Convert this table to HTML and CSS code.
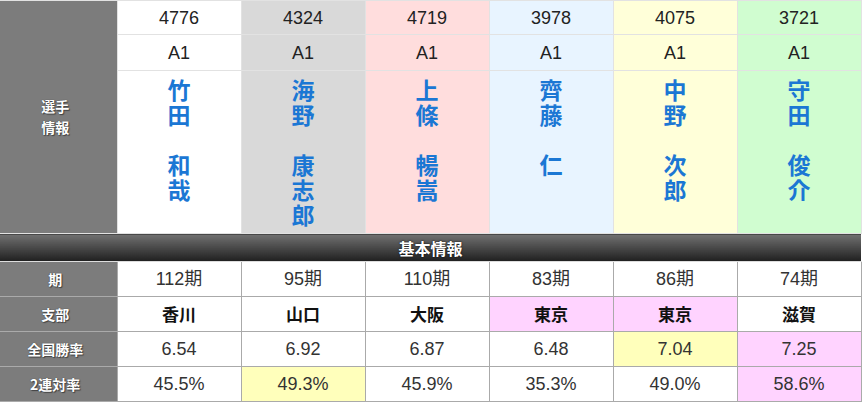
FILE: index.html
```html
<!DOCTYPE html>
<html lang="ja">
<head>
<meta charset="utf-8">
<title>選手情報</title>
<link rel="stylesheet" href="styles.css">
</head>
<body>
<table class="racer">
  <colgroup>
    <col class="c-label">
    <col class="c-boat"><col class="c-boat"><col class="c-boat"><col class="c-boat"><col class="c-boat"><col class="c-boat">
  </colgroup>
  <tbody class="top">
    <tr class="r-no">
      <th class="label" rowspan="3">選手<br>情報</th>
      <td class="b1">4776</td>
      <td class="b2">4324</td>
      <td class="b3">4719</td>
      <td class="b4">3978</td>
      <td class="b5">4075</td>
      <td class="b6">3721</td>
    </tr>
    <tr class="r-cls">
      <td class="b1">A1</td>
      <td class="b2">A1</td>
      <td class="b3">A1</td>
      <td class="b4">A1</td>
      <td class="b5">A1</td>
      <td class="b6">A1</td>
    </tr>
    <tr class="r-name">
      <td class="b1"><span class="name">竹<br>田<br><br>和<br>哉</span></td>
      <td class="b2"><span class="name">海<br>野<br><br>康<br>志<br>郎</span></td>
      <td class="b3"><span class="name">上<br>條<br><br>暢<br>嵩</span></td>
      <td class="b4"><span class="name">齊<br>藤<br><br>仁</span></td>
      <td class="b5"><span class="name">中<br>野<br><br>次<br>郎</span></td>
      <td class="b6"><span class="name">守<br>田<br><br>俊<br>介</span></td>
    </tr>
  </tbody>
  <tbody class="head">
    <tr>
      <th class="section" colspan="7">基本情報</th>
    </tr>
  </tbody>
  <tbody class="basic">
    <tr>
      <th class="label">期</th>
      <td>112期</td>
      <td>95期</td>
      <td>110期</td>
      <td>83期</td>
      <td>86期</td>
      <td>74期</td>
    </tr>
    <tr class="r-branch">
      <th class="label">支部</th>
      <td>香川</td>
      <td>山口</td>
      <td>大阪</td>
      <td class="hl-pink">東京</td>
      <td class="hl-pink">東京</td>
      <td>滋賀</td>
    </tr>
    <tr>
      <th class="label">全国勝率</th>
      <td>6.54</td>
      <td>6.92</td>
      <td>6.87</td>
      <td>6.48</td>
      <td class="hl-yellow">7.04</td>
      <td class="hl-pink">7.25</td>
    </tr>
    <tr>
      <th class="label">2連対率</th>
      <td>45.5%</td>
      <td class="hl-yellow">49.3%</td>
      <td>45.9%</td>
      <td>35.3%</td>
      <td>49.0%</td>
      <td class="hl-pink">58.6%</td>
    </tr>
  </tbody>
</table>
</body>
</html>
```

FILE: styles.css
```css
html, body {
  margin: 0;
  padding: 0;
  background: #ffffff;
}

body {
  font-family: "Liberation Sans", Arial, "Noto Sans CJK JP", sans-serif;
  color: #222222;
}

.racer {
  border-collapse: collapse;
  table-layout: fixed;
  width: 861px;
}

.c-label { width: 117px; }
.c-boat { width: 124px; }

.racer th,
.racer td {
  padding: 0;
  text-align: center;
}

/* left labels */
.label {
  background: #7c7c7c;
  color: #ffffff;
  font-family: "Noto Sans CJK JP", sans-serif;
  font-weight: bold;
  font-size: 14px;
  line-height: 21px;
  padding-right: 6px !important;
  text-shadow: 0 0 1px #333333, 1px 1px 1px #444444;
}

/* top block */
.top td,
.top th {
  border: 1px solid #e2e2e2;
}

.top .label {
  border-left: none;
  vertical-align: middle;
}

.r-no td {
  height: 33px;
  font-size: 18px;
  line-height: 20px;
  color: #222222;
}

.r-cls td {
  height: 35px;
  font-size: 18px;
  line-height: 20px;
  color: #222222;
}

.r-name td {
  height: 156px;
  vertical-align: top;
  padding-top: 6px;
}

.name {
  display: inline-block;
  font-family: "Noto Sans CJK JP", sans-serif;
  font-weight: bold;
  font-size: 23px;
  line-height: 25px;
  color: #1b77d4;
}

.b1 { background: #ffffff; }
.b2 { background: #d9d9d9; }
.b3 { background: #ffdddd; }
.b4 { background: #e8f4ff; }
.b5 { background: #ffffd9; }
.b6 { background: #d0fdd0; }

/* section header */
.section {
  height: 27px;
  border-top: 1px solid #dddddd;
  border-bottom: 1px solid #dddddd;
  background: linear-gradient(#717171, #1f1f1f);
  color: #ffffff;
  font-family: "Noto Sans CJK JP", sans-serif;
  font-size: 16px;
  font-weight: bold;
  line-height: 20px;
  text-shadow: 0 0 2px #000000;
}

/* basic info */
.basic td,
.basic th {
  border: 1px solid #aaaaaa;
  height: 34px;
}

.basic .label {
  border-left: none;
  border-color: #aaaaaa;
}

.basic td {
  font-size: 18px;
  line-height: 22px;
  color: #333333;
  background: #ffffff;
}

.basic .r-branch td {
  font-family: "Noto Sans CJK JP", sans-serif;
  font-size: 17px;
  font-weight: bold;
  color: #111111;
}

.basic td.hl-pink { background: #ffd3ff; }
.basic td.hl-yellow { background: #ffffbb; }
```
